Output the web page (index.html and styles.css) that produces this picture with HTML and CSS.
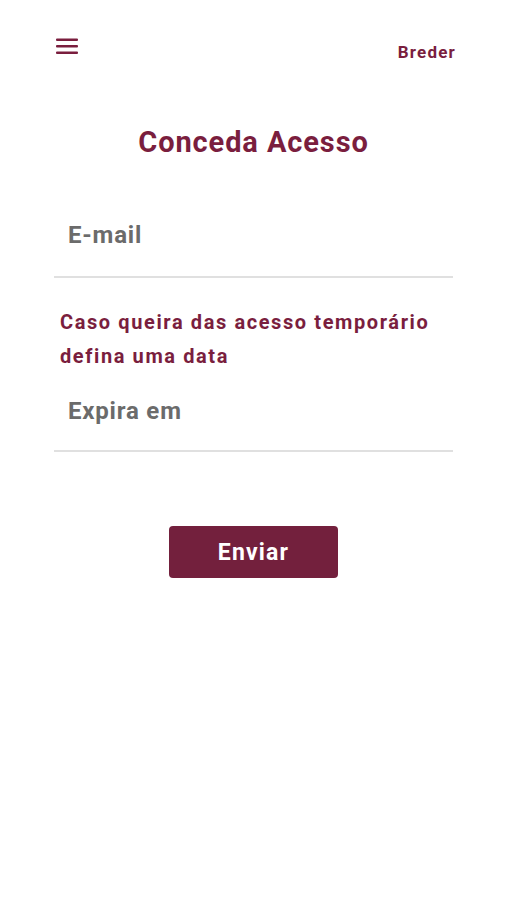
FILE: index.html
```html
<!DOCTYPE html>
<html lang="pt">
<head>
<meta charset="utf-8">
<title>Conceda Acesso</title>
<link rel="stylesheet" href="styles.css">
</head>
<body>
<header class="topbar">
  <button class="menu" aria-label="Menu">
    <svg width="22" height="17" viewBox="0 0 22 17"><rect x="0" y="1.5" width="22" height="2.5" rx="1"/><rect x="0" y="8" width="22" height="2.5" rx="1"/><rect x="0" y="14.5" width="22" height="2.5" rx="1"/></svg>
  </button>
  <span class="brand">Breder</span>
</header>
<main class="content">
  <h1 class="title">Conceda Acesso</h1>
  <form class="form">
    <div class="field"><span class="placeholder">E-mail</span></div>
    <p class="hint">Caso queira das acesso temporário defina uma data</p>
    <div class="field field-date"><span class="placeholder">Expira em</span></div>
    <div class="actions"><button type="button" class="submit">Enviar</button></div>
  </form>
</main>
</body>
</html>
```
FILE: styles.css
```css
* { box-sizing: border-box; }
body {
  margin: 0;
  background: #fff;
  font-family: Roboto, "Liberation Sans", sans-serif;
  color: #7a1e3e;
}
.topbar {
  display: flex;
  justify-content: space-between;
  align-items: flex-start;
  padding: 37px 52px 0 56px;
  height: 70px;
}
.menu {
  border: 0;
  background: none;
  padding: 0;
  width: 22px;
  height: 17px;
  fill: #7a1e3e;
  display: block;
}
.menu svg { display: block; }
.brand {
  font-weight: 700;
  font-size: 17px;
  line-height: 20px;
  margin-top: 5px;
  letter-spacing: 1.2px;
  margin-right: -1px;
}
.content {
  padding: 0 54px;
}
.title {
  margin: 55px 0 0;
  text-align: center;
  font-size: 29px;
  line-height: 34px;
  font-weight: 700;
  letter-spacing: 0.9px;
}
.form { margin-top: 46px; }
.field {
  height: 73px;
  border-bottom: 2px solid #e0e0e0;
  padding: 16px 0 0 14px;
}
.placeholder {
  font-size: 24px;
  line-height: 28px;
  font-weight: 700;
  color: #6b6b6b;
  letter-spacing: 0.8px;
}
.hint {
  margin: 27px 0 0 6px;
  font-size: 20px;
  line-height: 34px;
  font-weight: 700;
  letter-spacing: 1.6px;
}
.field-date {
  height: 79px;
  padding-top: 24px;
}
.actions {
  display: flex;
  justify-content: center;
  margin-top: 74px;
}
.submit {
  width: 169px;
  height: 52px;
  border: 0;
  border-radius: 4px;
  background: #73203d;
  color: #fff;
  font-family: inherit;
  font-size: 23px;
  font-weight: 700;
  letter-spacing: 1.2px;
}
```
